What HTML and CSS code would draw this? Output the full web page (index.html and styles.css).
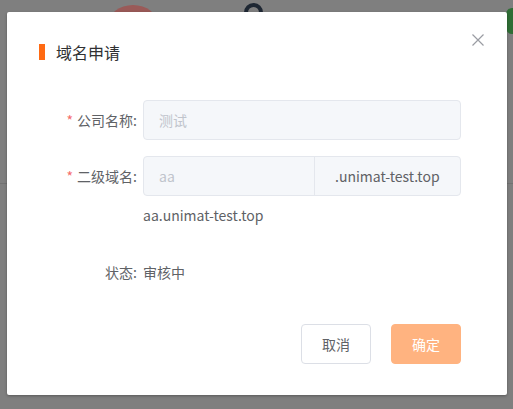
FILE: index.html
```html
<!DOCTYPE html>
<html lang="zh-CN">
<head>
<meta charset="utf-8">
<title>域名申请</title>
<link rel="stylesheet" href="styles.css">
</head>
<body>
<div class="backdrop">
  <div class="bg-red"></div>
  <div class="bg-ring"></div>
  <div class="bg-green"></div>
  <div class="bg-line"></div>
</div>
<div class="dialog">
  <button class="close" aria-label="关闭">
    <svg width="12" height="12" viewBox="0 0 12 12"><path d="M0.5 0.5 L11.5 11.5 M11.5 0.5 L0.5 11.5" stroke="#9a9ca3" stroke-width="1.2" fill="none"/></svg>
  </button>
  <div class="header">
    <span class="bar"></span>
    <span class="title">域名申请</span>
  </div>
  <div class="form">
    <div class="row">
      <div class="label"><span class="req">*</span>公司名称:</div>
      <div class="input"><span class="ph">测试</span></div>
    </div>
    <div class="row row2">
      <div class="label"><span class="req">*</span>二级域名:</div>
      <div class="group">
        <div class="group-input"><span class="ph">aa</span></div>
        <div class="append">.unimat-test.top</div>
      </div>
    </div>
    <div class="tip">aa.unimat-test.top</div>
    <div class="status">
      <div class="label">状态:</div>
      <div class="value">审核中</div>
    </div>
  </div>
  <div class="footer">
    <button class="btn cancel">取消</button>
    <button class="btn confirm">确定</button>
  </div>
</div>
</body>
</html>
```
FILE: styles.css
```css
* { box-sizing: border-box; }
html, body { margin: 0; padding: 0; }
body {
  width: 513px;
  height: 409px;
  overflow: hidden;
  background: #7f7f7f;
  font-family: "Noto Sans CJK SC", "Noto Sans", sans-serif;
  font-size: 14px;
  color: #606266;
  position: relative;
  padding: 12px 0 0 7px;
}
.backdrop { position: absolute; inset: 0; }
.bg-red {
  position: absolute; left: 108px; top: 5px; width: 50px; height: 40px;
  border-radius: 50%; background: #9a5a58;
}
.bg-ring {
  position: absolute; left: 244px; top: 3px; width: 19px; height: 19px;
  border-radius: 50%; border: 4px solid #1e2733;
}
.bg-green {
  position: absolute; left: 506px; top: 8px; width: 16px; height: 26px;
  background: #2f6e35; border-radius: 6px;
}
.bg-line {
  position: absolute; left: 0; right: 0; top: 183px; height: 1px; background: #727272;
}
.dialog {
  position: relative;
  width: 500px;
  height: 383px;
  background: #fff;
  border-radius: 2px;
  box-shadow: 0 1px 3px rgba(0,0,0,.3);
  padding-top: 32px;
  display: flex;
  flex-direction: column;
}
.close {
  position: absolute; right: 23px; top: 22px;
  width: 12px; height: 12px; padding: 0; border: 0; background: none;
  display: flex;
}
.header {
  display: flex; align-items: center; height: 16px;
  padding-left: 32px;
}
.bar { width: 6px; height: 16px; background: #ff6a13; }
.title {
  margin-left: 11px; font-size: 16px; line-height: 16px; color: #303133;
}
.form { margin-top: 40px; }
.row { display: flex; height: 40px; }
.row2 { margin-top: 16px; }
.label {
  width: 136px; padding-right: 6px; text-align: right;
  line-height: 40px; color: #606266; white-space: nowrap;
}
.req { color: #f56c6c; margin-right: 4px; }
.input, .group {
  width: 318px; height: 40px;
  background: #f5f7fa; border: 1px solid #e4e7ed; border-radius: 4px;
}
.input { padding-left: 15px; line-height: 38px; }
.ph { color: #c0c4cc; }
.group { display: flex; }
.group-input { width: 170px; padding-left: 15px; line-height: 38px; }
.append {
  flex: 1; border-left: 1px solid #e4e7ed; padding-left: 20px;
  line-height: 38px; color: #606266;
}
.tip { margin-top: 9px; margin-left: 136px; line-height: 20px; color: #606266; }
.status { display: flex; margin-top: 37px; height: 20px; }
.status .label { line-height: 20px; }
.value { line-height: 20px; color: #606266; }
.footer {
  margin-top: 42px; display: flex; justify-content: flex-end; gap: 20px;
  padding-right: 46px;
}
.btn {
  width: 70px; height: 40px; border-radius: 4px; font-family: inherit;
  font-size: 14px; padding: 0;
}
.cancel { background: #fff; border: 1px solid #dcdfe6; color: #606266; }
.confirm { background: #ffb380; border: 1px solid #ffb380; color: #fff; }
```
